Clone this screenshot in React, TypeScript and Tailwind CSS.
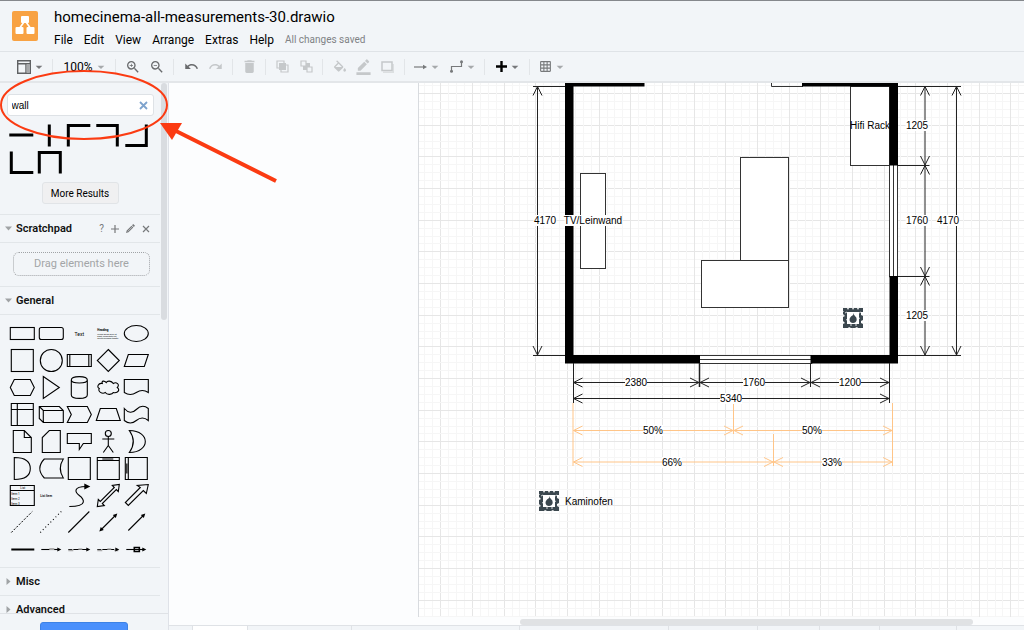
import { Fragment, ReactNode } from 'react';
import {
  MdArrowDropDown,
  MdBorderColor,
  MdDelete,
  MdFormatColorFill,
  MdGridOn,
  MdRedo,
  MdUndo,
  MdZoomIn,
  MdZoomOut,
} from 'react-icons/md';

const composeClasses = (...classes: Array<string | false | null | undefined>) => classes.filter(Boolean).join(' ');

const menus = ['File', 'Edit', 'View', 'Arrange', 'Extras', 'Help'];

/* ---------- header ---------- */

const Logo = () => (
  <svg width="26" height="30" viewBox="0 0 26 30" aria-hidden="true">
    <rect width="26" height="30" rx="2" fill="#f8a243" />
    <path d="M12 11 7 18M14 11l5 7" stroke="#fff" strokeWidth="1.6" />
    <rect x="9" y="5" width="8" height="7" rx="1" fill="#fff" />
    <rect x="3.5" y="16" width="8" height="7" rx="1" fill="#fff" />
    <rect x="14.5" y="16" width="8" height="7" rx="1" fill="#fff" />
  </svg>
);

const Header = () => (
  <header className="flex h-[52px] shrink-0 items-center gap-4 border-t border-b border-t-[#85888c] border-b-[#dfe3e7] pl-3">
    <Logo />
    <div className="flex flex-col gap-1 pt-[3px]">
      <h1 className="text-[15px] leading-[20px] text-black">homecinema-all-measurements-30.drawio</h1>
      <nav className="flex items-center gap-[11px] text-[12px] leading-[18px] text-black">
        {menus.map(menu => (
          <button key={menu} type="button">
            {menu}
          </button>
        ))}
        <span className="text-[10px] text-[#808285]">All changes saved</span>
      </nav>
    </div>
  </header>
);

/* ---------- toolbar ---------- */

const Caret = ({ dark }: { dark?: boolean }) => (
  <MdArrowDropDown size={16} className={composeClasses('-mx-1', dark ? 'text-[#77797b]' : 'text-[#a6a9ab]')} />
);

const ToolGroup = ({ className, children }: { className: string; children: ReactNode }) => (
  <div className={composeClasses('flex h-4 shrink-0 items-center justify-center border-r border-[#e2e5e8]', className)}>
    {children}
  </div>
);

const Tool = ({ label, off, children }: { label: string; off?: boolean; children: ReactNode }) => (
  <button
    type="button"
    aria-label={label}
    className={composeClasses('flex h-6 w-6 items-center justify-center', off ? 'text-[#c5c8ca]' : 'text-[#696b6d]')}
  >
    {children}
  </button>
);

const DropTool = ({ label, dark, children }: { label: string; dark?: boolean; children: ReactNode }) => (
  <button type="button" aria-label={label} className="flex h-6 w-9 items-center justify-center gap-1 text-[#77797b]">
    {children}
    <Caret dark={dark} />
  </button>
);

const Toolbar = () => (
  <div className="flex h-[31px] shrink-0 items-center border-b-2 border-[#e3e6e9]">
    <ToolGroup className="w-[53px] pl-[8px]">
      <DropTool label="View" dark>
        <svg width="14" height="14" viewBox="0 0 14 14" fill="none" stroke="#606264" strokeWidth="1.4">
          <path d="M.7.7h12.6v12.6H.7zM.7 3.7h12.6M9 3.7v9.6" />
          <path d="M9.5 4.2h3.3v8.6H9.5z" fill="#a7a9ab" stroke="none" />
        </svg>
      </DropTool>
    </ToolGroup>
    <ToolGroup className="w-[63px]">
      <button type="button" className="flex items-center gap-1 text-[12px] text-black">
        100%
        <Caret />
      </button>
    </ToolGroup>
    <ToolGroup className="w-[58px]">
      <Tool label="Zoom in">
        <MdZoomIn size={16} stroke="currentColor" />
      </Tool>
      <Tool label="Zoom out">
        <MdZoomOut size={16} stroke="currentColor" />
      </Tool>
    </ToolGroup>
    <ToolGroup className="w-[59px]">
      <Tool label="Undo">
        <MdUndo size={15} />
      </Tool>
      <Tool label="Redo" off>
        <MdRedo size={15} />
      </Tool>
    </ToolGroup>
    <ToolGroup className="w-[33px]">
      <Tool label="Delete" off>
        <MdDelete size={17} />
      </Tool>
    </ToolGroup>
    <ToolGroup className="w-[57px]">
      <Tool label="To front" off>
        <svg width="13" height="13" viewBox="0 0 13 13" fill="none" stroke="currentColor" strokeWidth="1.2">
          <path d="M3 8H1V1h7v2M5 10v2h7V5h-2" />
          <path d="M3 3h7v7H3z" fill="currentColor" stroke="none" />
        </svg>
      </Tool>
      <Tool label="To back" off>
        <svg width="13" height="13" viewBox="0 0 13 13" fill="none" stroke="currentColor" strokeWidth="1.2">
          <path d="M1 1h5v5H1zM7 7h5v5H7z" />
          <path d="M6 3h4v4H6zM3 6h4v4H3z" fill="currentColor" stroke="none" />
        </svg>
      </Tool>
    </ToolGroup>
    <ToolGroup className="w-[82px]">
      <Tool label="Fill color" off>
        <svg width="16" height="16" viewBox="0 0 24 20" className="overflow-visible">
          <MdFormatColorFill size={24} />
          <path d="M0 19h24v6H0z" fill="#f2f5f8" />
        </svg>
      </Tool>
      <Tool label="Line color" off>
        <MdBorderColor size={17} />
      </Tool>
      <Tool label="Shadow" off>
        <svg width="13" height="12" viewBox="0 0 13 12">
          <path d="M2 11.5h10.5V3" fill="none" stroke="#dcdfe1" strokeWidth="2" />
          <rect x="1" y="1" width="10" height="8.5" fill="none" stroke="currentColor" strokeWidth="1.5" />
        </svg>
      </Tool>
    </ToolGroup>
    <ToolGroup className="w-[80px]">
      <DropTool label="Connection">
        <svg width="13" height="6" viewBox="0 0 13 6">
          <path d="M0 3h10" stroke="currentColor" strokeWidth="1.2" />
          <path d="M9 .8 13 3 9 5.2z" fill="currentColor" />
        </svg>
      </DropTool>
      <DropTool label="Waypoints">
        <svg width="13" height="13" viewBox="0 0 13 13">
          <path d="M1.5 11V6.5h10V2" fill="none" stroke="currentColor" strokeWidth="1.2" />
          <circle cx="1.5" cy="11.3" r="1.5" fill="currentColor" />
          <circle cx="11.5" cy="1.7" r="1.5" fill="currentColor" />
        </svg>
      </DropTool>
    </ToolGroup>
    <ToolGroup className="w-[45px]">
      <DropTool label="Insert" dark>
        <svg width="11" height="11" viewBox="0 0 11 11">
          <path d="M5.5 0v11M0 5.5h11" stroke="#000" strokeWidth="2.4" />
        </svg>
      </DropTool>
    </ToolGroup>
    <div className="flex w-[42px] shrink-0 items-center justify-center">
      <DropTool label="Table">
        <MdGridOn size={13} />
      </DropTool>
    </div>
  </div>
);

/* ---------- sidebar ---------- */

const Cell = ({ children }: { children: ReactNode }) => (
  <svg className="h-[27px] w-full overflow-visible" viewBox="-14 -13.5 28 27" fill="none" stroke="#000" strokeWidth="1.1">
    {children}
  </svg>
);

const wallPaths = ['M-13-.5H11', 'M-1-11V11', 'M-11 11V-10H11', 'M-11-10H10V11', 'M-11 10H10V-11', 'M-11-11V10H11', 'M-11 11V-10H10V11'];

const solid = (d: string) => <path d={d} fill="#000" stroke="none" />;

const generalShapes: ReactNode[] = [
  <rect x="-12" y="-6" width="24" height="12" />,
  <rect x="-12" y="-6" width="24" height="12" rx="2" />,
  <text x="0" y="2" fontSize="5" textAnchor="middle" fill="#000" stroke="none">
    Text
  </text>,
  <g fill="#000" stroke="none">
    <text x="-11" y="-3" fontSize="3" fontWeight="700">
      Heading
    </text>
    <text x="-11" y="1" fontSize="2">
      Lorem ipsum dolor sit
    </text>
    <text x="-11" y="3" fontSize="2">
      amet, consectetur elit,
    </text>
    <text x="-11" y="5" fontSize="2">
      sed do eiusmod tempor
    </text>
  </g>,
  <ellipse rx="12" ry="8" />,

  <rect x="-11" y="-11" width="22" height="22" />,
  <circle r="11" />,
  <path d="M-12-6H12V6H-12zM-9.5-6V6M9.5-6V6" />,
  <path d="M0-11 11 0 0 11-11 0z" />,
  <path d="M-12 6-8-6H12L8 6z" />,

  <path d="M-12 0-8-8H8L12 0 8 8H-8z" />,
  <path d="M-8-11 8 0-8 11z" />,
  <path d="M-8-7.5C-8-12 8-12 8-7.5V7.5C8 12-8 12-8 7.5zC-8-3.5 8-3.5 8-7.5" />,
  <path d="M-6-4C-10-5-12 0-9 1C-11 4-6 7-3 5C-1 8 4 7 5 5C10 6 12 2 9 0C12-3 8-6 5-4C3-7-1-7-2-5C-4-7-7-7-6-4z" />,
  <path d="M-12-8H12V5Q6 1 0 5T-12 5z" />,

  <path d="M-11-11H11V11H-11zM-11-5H11M-5-11V11" />,
  <path d="M-12-8H8L12-4V8H-8L-12 4zL-8-4H12M-8-4V8" />,
  <path d="M-12-8H8L12 0 8 8H-12L-8 0z" />,
  <path d="M-12 6-8-6H8L12 6z" />,
  <path d="M-12-6Q-6 1 0-5T12-6V6Q6 1 0 6T-12 6z" />,

  <path d="M-9-11H2L9-4V11H-9zM2-11V-4H9" />,
  <path d="M-2-11H9V11H-9V-4z" />,
  <path d="M-12-8H12V2H4L0 8V2H-12z" />,
  <g>
    <circle cy="-8" r="3" />
    <path d="M0-5V4M-6-2.5H6M0 4-5 11M0 4 5 11" />
  </g>,
  <path d="M-7-11C4-11 9-5 9 0S4 11-7 11Q1 0-7-11z" />,

  <path d="M-8-11C5-11 8-5 8 0S5 11-8 11z" />,
  <path d="M-7-9.5H12Q6 0 12 9.5H-7Q-16 0-7-9.5z" />,
  <path d="M-11-11H11V11H-11z" />,
  <path d="M-11-11H11V11H-11zM-11-8H11M-6-9.5H5" />,
  <path d="M-11-11H11V11H-11zM-8-11V11M-9.5-5V5" />,

  <g>
    <path d="M-12-10H12V10H-12zM-12-5H12" />
    <g fill="#000" stroke="none" fontSize="3">
      <text x="-2" y="-7">
        List
      </text>
      <text x="-11" y="-1">
        Item 1
      </text>
      <text x="-11" y="4">
        Item 2
      </text>
      <text x="-11" y="9">
        Item 3
      </text>
    </g>
  </g>,
  <text x="-11" y="1" fontSize="3" fontWeight="600" fill="#000" stroke="none">
    List Item
  </text>,
  <g>
    <path d="M-10 11C10 11 4 3 0 0S-7-9 7-9" />
    {solid('M5-12 11-9 5-6z')}
  </g>,
  <path d="M11-11 10-4 8-6-6 8-4 10-11 11-10 4-8 6 6-8 4-10z" />,
  <path d="M12-11 10-2 7-5-8 10-11 7 4-8 1-10z" />,

  <path d="M-11 10 10-11" strokeWidth="1" strokeDasharray="2 1.6" />,
  <path d="M-11 10 10-11" strokeDasharray="1 2.6" />,
  <path d="M-11 10 10-11" />,
  <g>
    <path d="M-7 7 7-7" />
    {solid('M9-9 7.5-4.5 4.5-7.5zM-9 9-7.5 4.5-4.5 7.5z')}
  </g>,
  <g>
    <path d="M-8 8 7-7" />
    {solid('M9-9 7.5-4.5 4.5-7.5z')}
  </g>,

  <path d="M-11 0H12" strokeWidth="2" />,
  <g>
    <path d="M-10 0H8" />
    <path d="M-2-.5H3" stroke="#aaa" strokeWidth="2" />
    {solid('M10 0 6-2V2z')}
  </g>,
  <g>
    <path d="M-11 0H-7M-6 0H8" />
    <path d="M-11 1H-6M-1-.5H3" stroke="#aaa" strokeWidth="1.5" />
    {solid('M11 0 7-2V2z')}
  </g>,
  <g>
    <path d="M-11 0H-7M-6 0H6" />
    <path d="M-11 1H-6M-1-.5H3M6 1H10" stroke="#aaa" strokeWidth="1.5" />
    {solid('M11 0 7-2V2z')}
  </g>,
  <g>
    <path d="M-10 0H8" />
    <path d="M-2-2H3V2H-2z" strokeWidth="1.6" />
    {solid('M10 0 6-2V2z')}
  </g>,
];

const SectionTitle = ({ title, open, children }: { title: string; open?: boolean; children?: ReactNode }) => (
  <div className="flex h-7 items-center border-b border-[#e2e6e9] pl-[5px]">
    <button type="button" className="flex items-center gap-1 text-[11px] leading-none font-semibold text-[#111]">
      <svg width="7" height="7" viewBox="0 0 7 7" fill="#a0a3a5">
        <path d={open ? 'M0 1.5h7L3.5 5.5z' : 'M1.5 0v7L5.5 3.5z'} />
      </svg>
      {title}
    </button>
    {children}
  </div>
);

const Sidebar = () => (
  <aside className="flex w-[169px] shrink-0 flex-col border-r border-[#dfe2e8]">
    <div className="flex min-h-0 flex-1 overflow-hidden">
      <div className="w-[160px]">
        <div className="flex flex-col items-center border-b border-[#e2e6e9] pt-[11px] pb-[10px]">
          <label className="flex h-[22px] w-[147px] items-center rounded-[3px] border border-[#dee2e6] bg-white pr-[5px] pl-1">
            <input
              type="text"
              aria-label="Search shapes"
              defaultValue="wall"
              className="min-w-0 flex-1 font-['Liberation_Sans',sans-serif] text-[10px] text-black outline-none"
            />
            <button type="button" aria-label="Clear search">
              <svg width="9" height="9" viewBox="0 0 9 9" stroke="#7ea3cd" strokeWidth="1.8">
                <path d="m1 1 7 7M8 1 1 8" />
              </svg>
            </button>
          </label>
          <div className="mt-[6px] mr-[2px] grid w-[143px] grid-cols-5">
            {wallPaths.map(d => (
              <Cell key={d}>
                <path d={d} strokeWidth="3" />
              </Cell>
            ))}
          </div>
          <button
            type="button"
            className="mt-[6px] h-[22px] w-[77px] rounded-[3px] border border-[#e1e4e7] bg-[#f0f0f1] text-[10px] text-black"
          >
            More Results
          </button>
        </div>

        <SectionTitle title="Scratchpad" open>
          <div className="ml-auto flex items-center gap-[7px] pr-[10px] text-[#77797b]">
            <button type="button" aria-label="Help" className="text-[10px]">
              ?
            </button>
            <button type="button" aria-label="Add">
              <svg width="8" height="8" viewBox="0 0 8 8" stroke="currentColor" strokeWidth="1.2">
                <path d="M4 0v8M0 4h8" />
              </svg>
            </button>
            <button type="button" aria-label="Edit">
              <svg width="9" height="9" viewBox="0 0 9 9" fill="currentColor">
                <path d="M0 9 .7 6.5 5.5 1.7 7.3 3.5 2.5 8.3zM6 1.2 7.2 0 9 1.8 7.8 3z" />
                <path d="M1.7 7.4 6 3.1" stroke="#f2f5f8" strokeWidth=".5" />
              </svg>
            </button>
            <button type="button" aria-label="Close">
              <svg width="8" height="8" viewBox="0 0 8 8" stroke="currentColor" strokeWidth="1.2">
                <path d="m1 1 6 6M7 1 1 7" />
              </svg>
            </button>
          </div>
        </SectionTitle>
        <div className="border-b border-[#e2e6e9] pt-[9px] pr-[10px] pb-[10px] pl-[13px]">
          <div className="flex h-6 items-center justify-center rounded-[6px] border border-dotted border-[#a0a3a6] text-[11px] text-[#a3a5a7]">
            Drag elements here
          </div>
        </div>

        <SectionTitle title="General" open />
        <div className="border-b border-[#e2e6e9] pt-[5px] pb-1 pl-2">
          <div className="grid w-[143px] grid-cols-5">
            {generalShapes.map((shape, idx) => (
              <Cell key={idx}>{shape}</Cell>
            ))}
          </div>
        </div>
        <SectionTitle title="Misc" />
        <SectionTitle title="Advanced" />
      </div>
      <div className="ml-px h-[237px] w-[6px] rounded-full bg-[#d9dce0]" />
    </div>
    <div className="flex h-[17px] shrink-0 justify-center overflow-hidden border-t border-[#dfe2e6] pt-[8px]">
      <button
        type="button"
        aria-label="More shapes"
        className="h-[30px] w-[88px] rounded-[3px] border border-[#3d82e4] bg-[#4a90fc]"
      />
    </div>
  </aside>
);

/* ---------- canvas ---------- */

// the view shows the drawing from this point on
const ORIGIN = { x: 169, y: 83 };
const GRID = 31.67;
const PAGE_LEFT = 418;

const gridSteps = Array.from({ length: 260 }, (_, i) => i);

const Grid = () => (
  <g shapeRendering="crispEdges">
    {gridSteps.map(i => {
      const major = i % 4 === 0;
      const x = Math.floor(440.8 - GRID + (i * GRID) / 4);
      const y = Math.floor(93.5 - GRID + (i * GRID) / 4);
      return (
        <Fragment key={i}>
          {x > PAGE_LEFT && <rect x={x} y="0" width="1" height="4000" fill={major ? '#e6e6e6' : '#f6f6f6'} />}
          <rect x={PAGE_LEFT} y={y} width="4000" height="1" fill={major ? '#e6e6e6' : '#f6f6f6'} />
        </Fragment>
      );
    })}
  </g>
);

// dimension line with an open arrow head at both ends
const HDim = ({ x1, x2, y }: { x1: number; x2: number; y: number }) => (
  <path
    d={`M${x1} ${y}H${x2}M${x1 + 9} ${y - 4.5}L${x1} ${y}l9 4.5M${x2 - 9} ${y - 4.5}L${x2} ${y}l-9 4.5`}
  />
);

const VDim = ({ y1, y2, x }: { y1: number; y2: number; x: number }) => (
  <path
    d={`M${x} ${y1}V${y2}M${x - 4.5} ${y1 + 9}L${x} ${y1}l4.5 9M${x - 4.5} ${y2 - 9}L${x} ${y2}l4.5 -9`}
  />
);

const labels = [
  { text: '4170', x: 545, y: 221, w: 23 },
  { text: 'TV/Leinwand', x: 593, y: 221, w: 57 },
  { text: 'Hifi Rack', x: 870, y: 126, w: 38 },
  { text: '1205', x: 917, y: 126, w: 23 },
  { text: '1760', x: 917, y: 221, w: 23 },
  { text: '4170', x: 948, y: 221, w: 23 },
  { text: '1205', x: 917, y: 316, w: 23 },
  { text: '2380', x: 636, y: 383, w: 22 },
  { text: '1760', x: 754, y: 383, w: 22 },
  { text: '1200', x: 850, y: 383, w: 22 },
  { text: '5340', x: 731, y: 399, w: 22 },
  { text: '50%', x: 653, y: 431, w: 20 },
  { text: '50%', x: 812, y: 431, w: 20 },
  { text: '66%', x: 672, y: 463, w: 20 },
  { text: '33%', x: 832, y: 463, w: 20 },
];

const Stove = ({ x, y }: { x: number; y: number }) => (
  <g transform={`translate(${x} ${y})`}>
    <path
      d="M0 0H4L5 2 6 0H9L10 2 11 0H14L15 2 16 0H20V4H18V7L20 8V12L18 13V15L20 16V20H15L14 19 12 20H8L6 19 5 20H0V16L2 15 0 13V9L2 8 0 6V4L1 3H0z"
      fill="#3b474e"
    />
    <rect x="4" y="4" width="12" height="12" fill="#fff" />
    <path d="M2 5 4 4M16 5l2-1M3 12l2-1M15 11l2-1M8 18v-2M13 18v-2" stroke="#fff" strokeWidth=".8" />
    <path d="M11 5Q10.5 7 12 8Q14 9.5 13.7 12Q13 15 10 15T6.5 12Q6.3 10 8 8.5Q10.5 7.5 11 5z" fill="#3b474e" />
  </g>
);

const Diagram = () => (
  <svg className="block min-h-0 w-full flex-1" role="img" aria-label="Floor plan">
    <g transform={`translate(${-ORIGIN.x} ${-ORIGIN.y})`} fontFamily="'Liberation Sans', sans-serif">
      <rect x={PAGE_LEFT} y="0" width="4000" height="4000" fill="#fff" />
      <Grid />
      <rect x={PAGE_LEFT} y="0" width="1" height="4000" fill="#d8dbdf" />

      {/* furniture */}
      <g fill="#fff" stroke="#333" strokeWidth="1">
        <rect x="580.5" y="173.5" width="25" height="95" />
        <rect x="740.5" y="157.5" width="48" height="103" />
        <rect x="701.5" y="260.5" width="87" height="47" />
        <rect x="850.5" y="86.5" width="39" height="79" />
      </g>

      {/* windows and the door frame */}
      <g fill="#fff" stroke="#333">
        <path d="M889.5 165V277H897.5V165M893.5 165V277" />
        <path d="M699 355.5H812V363.5H699M699 359.5H812" />
        <path d="M771.5 82V86.5H803" fill="none" />
      </g>

      {/* walls */}
      <path d="M565 82H644.5V86.5H573.5V355H700V363.5H565z" />
      <path d="M802 82H898V165.5H889.5V86.5H802z" />
      <path d="M889.5 276H898V363.5H810.5V355H889.5z" />

      {/* dimensions */}
      <g fill="none" stroke="#222" strokeWidth="1">
        <path d="M533 86.5H565M533 355.5H565M898 86.5H961M898 165.5H929.5M898 276.5H929.5M898 355.5H961" />
        <path d="M573.5 363V403M810.5 363V387M889.5 363V403" />
        <path d="M699.5 363V387" strokeWidth="1.5" />
        <VDim x={537.5} y1={86.5} y2={355} />
        <VDim x={925} y1={86.5} y2={165} />
        <VDim x={925} y1={165.5} y2={276} />
        <VDim x={925} y1={276.5} y2={355} />
        <VDim x={956.5} y1={86.5} y2={355} />
        <HDim x1={573.5} x2={699} y={382.5} />
        <HDim x1={700} x2={810} y={382.5} />
        <HDim x1={811} x2={889} y={382.5} />
        <HDim x1={573.5} x2={889} y={398.5} />
      </g>
      <g fill="none" stroke="#ffc588">
        <path d="M573 403V466M733.5 403V434M892.5 403V466M773.5 434V466" />
        <HDim x1={573.5} x2={733} y={430.5} />
        <HDim x1={734} x2={892} y={430.5} />
        <HDim x1={573.5} x2={773} y={462} />
        <HDim x1={774} x2={892} y={462} />
      </g>

      {labels.map(({ text, x, y, w }) => (
        <Fragment key={`${text}-${x}-${y}`}>
          <rect x={x - w / 2} y={y - 6} width={w} height="11" fill="#fff" />
          <text x={x} y={y + 3} fontSize="10" textAnchor="middle">
            {text}
          </text>
        </Fragment>
      ))}

      <Stove x={843} y={308} />
      <Stove x={539} y={491} />
      <text x="565" y="505" fontSize="10">
        Kaminofen
      </text>
    </g>
  </svg>
);

const PageTabs = () => (
  <div className="flex h-[5px] shrink-0 overflow-hidden border-t border-[#dfe2e6] bg-[#f2f5f8]">
    <div className="w-6 border-r border-[#dfe2e6]" />
    <div className="w-[55px] border-r border-[#dfe2e6] bg-white" />
    <div className="w-[104px] border-r border-[#dfe2e6]" />
    <div className="w-[168px] border-r border-[#dfe2e6]" />
    <div className="w-[149px] border-r border-[#dfe2e6]" />
    <div className="w-[89px] border-r border-[#dfe2e6]" />
    <div className="w-[62px] border-r border-[#dfe2e6]" />
    <div className="w-[60px] border-r border-[#dfe2e6]" />
    <div className="w-[77px] border-r border-[#dfe2e6]" />
  </div>
);

const Annotation = () => (
  <svg className="pointer-events-none absolute top-0 left-0" width="290" height="200" aria-hidden="true">
    <ellipse cx="84" cy="105" rx="83" ry="34" fill="none" stroke="#fb3b12" strokeWidth="2" />
    <path d="M276 181 176 131" stroke="#fb3b12" strokeWidth="4" />
    <path d="M160 123H182L172 140z" fill="#fb3b12" />
  </svg>
);

const App = () => (
  <div className="relative flex h-screen flex-col overflow-hidden bg-[#f2f5f8] font-[Roboto,sans-serif]">
    <Header />
    <Toolbar />
    <div className="flex min-h-0 flex-1">
      <Sidebar />
      <main className="flex min-w-0 flex-1 flex-col bg-[#fcfdfe]">
        <Diagram />
        <div className="flex h-2 shrink-0 items-end">
          <div className="ml-[41%] h-[6px] w-[53%] rounded-full bg-[#e0e2e4]" />
        </div>
        <PageTabs />
      </main>
    </div>
    <Annotation />
  </div>
);

export default App;
